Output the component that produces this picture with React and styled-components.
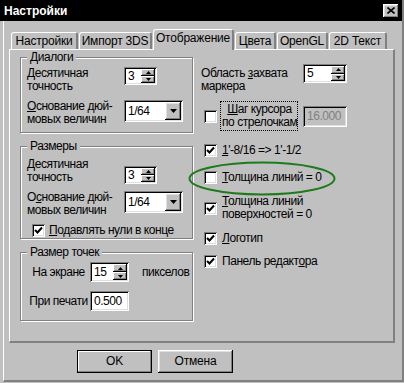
import React from "react";
import styled, { createGlobalStyle, css } from "styled-components";

const Global = createGlobalStyle`
    html, body {
        margin: 0;
        padding: 0;
        background: #c0c0c0;
    }
    body {
        font-family: "Liberation Sans", Arial, sans-serif;
        font-size: 12px;
        color: #000;
    }
`

const sunken = css`
    box-shadow: inset 1px 1px 0 #808080, inset -1px -1px 0 #fff,
        inset 2px 2px 0 #000, inset -2px -2px 0 #dfdfdf;
`
const raised = css`
    box-shadow: inset -1px -1px 0 #000, inset 1px 1px 0 #fff,
        inset -2px -2px 0 #808080, inset 2px 2px 0 #dfdfdf;
`
const text = css`
    font-size: 12px;
    line-height: 13px;
    letter-spacing: -0.45px;
`

const Window = styled.div`
    width: 402px;
    height: 382px;
    border-right: 2px solid #808080;
    background: #c0c0c0;
    display: flex;
    flex-direction: column;
`
const TitleBar = styled.div`
    height: 21px;
    flex: none;
    background: #000;
    color: #fff;
    display: flex;
    align-items: center;
    justify-content: space-between;
    padding: 0 3px 0 4px;
    font-weight: bold;
    font-size: 12px;
`
const CloseBtn = styled.div`
    width: 16px;
    height: 14px;
    background: #c0c0c0;
    display: flex;
    align-items: center;
    justify-content: center;
    ${raised}
`
const Body = styled.div`
    flex: 1;
    margin-left: 3px;
    border-left: 1px solid #fff;
    border-bottom: 2px solid #808080;
    padding: 8px 0 0 5px;
    display: flex;
    flex-direction: column;
`
const TabStrip = styled.div`
    height: 20px;
    display: flex;
    align-items: flex-end;
    gap: 1px;
    padding-left: 2px;
    position: relative;
    z-index: 1;
`
const Tab = styled.div`
    box-sizing: border-box;
    width: ${p => p.w}px;
    height: ${p => (p.active ? 21 : 17)}px;
    margin-bottom: ${p => (p.active ? -1 : 0)}px;
    padding-bottom: ${p => (p.active ? 3 : 0)}px;
    border-top: 1px solid #fff;
    border-left: 1px solid #fff;
    border-right: 2px solid #808080;
    border-radius: 3px 3px 0 0;
    background: #c0c0c0;
    display: flex;
    align-items: center;
    justify-content: center;
    white-space: nowrap;
    ${text}
    letter-spacing: -0.2px;
`
const Panel = styled.div`
    box-sizing: border-box;
    width: 386px;
    height: 294px;
    border-top: 1px solid #fff;
    border-left: 1px solid #fff;
    border-right: 2px solid #808080;
    border-bottom: 2px solid #808080;
    padding: 7px 0 0 10px;
    display: grid;
    grid-template-columns: 173px 1fr;
    column-gap: 8px;
    align-items: start;
`
const Column = styled.div`
    display: flex;
    flex-direction: column;
    gap: ${p => p.gap || 0}px;
`
const Group = styled.div`
    border: 1px solid #808080;
    box-shadow: inset 1px 1px 0 #fff, 1px 1px 0 #fff;
    padding: 0 6px ${p => p.pb}px;
    display: flex;
    flex-direction: column;
`
const Legend = styled.div`
    align-self: flex-start;
    margin: -7px 0 -6px 0;
    padding: 0 3px;
    background: #c0c0c0;
    ${text}
`
const GroupBody = styled.div`
    padding-top: ${p => p.pt}px;
    display: flex;
    flex-direction: column;
    gap: ${p => p.gap}px;
`
const Row = styled.div`
    display: flex;
    align-items: ${p => p.align || "flex-start"};
    margin-top: ${p => p.mt || 0}px;
`
const Label = styled.div`
    flex: none;
    width: ${p => p.w}px;
    margin-top: ${p => p.mt || 0}px;
    ${text}
`
const Key = styled.span`
    text-decoration: underline;
`
const Field = styled.div`
    box-sizing: border-box;
    flex: none;
    width: ${p => p.w}px;
    height: ${p => p.h}px;
    margin-top: ${p => p.mt || 0}px;
    margin-left: ${p => p.ml || 0}px;
    padding: 2px;
    background: ${p => (p.disabled ? "#c0c0c0" : "#fff")};
    color: ${p => (p.disabled ? "#808080" : "#000")};
    display: flex;
    ${text}
    ${sunken}
`
const FieldText = styled.div`
    flex: 1;
    padding-left: 2px;
    display: flex;
    align-items: center;
`
const SpinCol = styled.div`
    width: 14px;
    display: flex;
    flex-direction: column;
`
const SpinBtn = styled.div`
    flex: 1;
    background: #c0c0c0;
    display: flex;
    align-items: center;
    justify-content: center;
    box-shadow: inset -1px -1px 0 #000, inset 1px 1px 0 #fff, inset -2px -2px 0 #808080;
`
const DropBtn = styled.div`
    width: 16px;
    background: #c0c0c0;
    display: flex;
    align-items: center;
    justify-content: center;
    ${raised}
`
const Box = styled.div`
    box-sizing: border-box;
    flex: none;
    width: 13px;
    height: 13px;
    background: #fff;
    display: flex;
    align-items: center;
    justify-content: center;
    ${sunken}
`
const CheckRow = styled.div`
    position: relative;
    display: flex;
    align-items: center;
    gap: ${p => p.gap || 5}px;
    margin-left: ${p => p.ml || 3}px;
    margin-top: ${p => p.mt || 0}px;
    ${text}
`
const FocusLabel = styled.div`
    box-sizing: border-box;
    width: 78px;
    height: 30px;
    margin-left: 3px;
    padding: 1px 0 0 1px;
    border: 1px dotted #000;
    white-space: nowrap;
    ${text}
`
const Unit = styled.div`
    margin-left: 13px;
    ${text}
`
const Ring = styled.svg`
    position: absolute;
    left: -16px;
    top: -10px;
    pointer-events: none;
`
const ButtonRow = styled.div`
    display: flex;
    gap: 6px;
    margin-top: 7px;
    padding-left: 68px;
`
const Button = styled.div`
    box-sizing: border-box;
    width: 75px;
    height: 23px;
    display: flex;
    align-items: center;
    justify-content: center;
    background: #c0c0c0;
    ${text}
    letter-spacing: -0.2px;
    ${p => p.primary
        ? css`
            border: 1px solid #000;
            box-shadow: inset -1px -1px 0 #808080, inset 1px 1px 0 #fff;
        `
        : raised}
`

const Check = ({ checked }) => (
    <Box>
        {checked && (
            <svg width="9" height="9" viewBox="0 0 9 9">
                <polyline points="1,4 3.5,6.5 8,1.5" fill="none" stroke="#000" strokeWidth="2" />
            </svg>
        )}
    </Box>
)

const Arrow = ({ up }) => (
    <svg width="5" height="3" viewBox="0 0 5 3">
        <polygon points={up ? "2.5,0 5,3 0,3" : "0,0 5,0 2.5,3"} fill="#000" />
    </svg>
)

const Spinner = ({ value, w, h, mt, ml }) => (
    <Field w={w} h={h} mt={mt} ml={ml}>
        <FieldText>{value}</FieldText>
        <SpinCol>
            <SpinBtn><Arrow up /></SpinBtn>
            <SpinBtn><Arrow /></SpinBtn>
        </SpinCol>
    </Field>
)

const Combo = ({ value }) => (
    <Field w={59} h={22}>
        <FieldText>{value}</FieldText>
        <DropBtn>
            <svg width="7" height="4" viewBox="0 0 7 4">
                <polygon points="0,0 7,0 3.5,4" fill="#000" />
            </svg>
        </DropBtn>
    </Field>
)

const tabs = [
    { name: "Настройки", w: 67 },
    { name: "Импорт 3DS", w: 73 },
    { name: "Отображение", w: 81, active: true },
    { name: "Цвета", w: 41 },
    { name: "OpenGL", w: 51 },
    { name: "2D Текст", w: 58 },
]

const App = () => {
    return (
        <>
            <Global />
            <Window>
                <TitleBar>
                    <span>Настройки</span>
                    <CloseBtn>
                        <svg width="8" height="7" viewBox="0 0 8 7">
                            <path d="M0.5 0.5 L7.5 6.5 M7.5 0.5 L0.5 6.5" stroke="#000" strokeWidth="1.6" />
                        </svg>
                    </CloseBtn>
                </TitleBar>
                <Body>
                    <TabStrip>
                        {tabs.map(t => (
                            <Tab key={t.name} w={t.w} active={t.active}>{t.name}</Tab>
                        ))}
                    </TabStrip>
                    <Panel>
                        <Column gap={13}>
                            <Group pb={6}>
                                <Legend>Диалоги</Legend>
                                <GroupBody pt={9} gap={7}>
                                    <Row>
                                        <Label w={97}><Key>Д</Key>есятичная<br />точность</Label>
                                        <Spinner value="3" w={33} h={18} />
                                    </Row>
                                    <Row>
                                        <Label w={97}><Key>О</Key>снование дюй-<br />мовых величин</Label>
                                        <Combo value="1/64" />
                                    </Row>
                                </GroupBody>
                            </Group>
                            <Group pb={1}>
                                <Legend>Размеры</Legend>
                                <GroupBody pt={11} gap={7}>
                                    <Row>
                                        <Label w={97}><Key>Д</Key>есятичная<br />точность</Label>
                                        <Spinner value="3" w={33} h={18} mt={8} />
                                    </Row>
                                    <Row>
                                        <Label w={97}>О<Key>с</Key>нование дюй-<br />мовых величин</Label>
                                        <Combo value="1/64" />
                                    </Row>
                                    <CheckRow ml={5} gap={4}>
                                        <Check checked />
                                        <span><Key>П</Key>одавлять нули в конце</span>
                                    </CheckRow>
                                </GroupBody>
                            </Group>
                            <Group pb={9}>
                                <Legend>Размер точек</Legend>
                                <GroupBody pt={9} gap={9}>
                                    <Row align="center">
                                        <Label w={63}>На экране</Label>
                                        <Spinner value="15" w={39} h={20} />
                                        <Unit>пикселов</Unit>
                                    </Row>
                                    <Row align="center">
                                        <Label w={63}>При печати</Label>
                                        <Field w={39} h={20}>
                                            <FieldText>0.500</FieldText>
                                        </Field>
                                    </Row>
                                </GroupBody>
                            </Group>
                        </Column>
                        <Column>
                            <Row mt={7}>
                                <Label w={102} mt={3}>Область <Key>з</Key>ахвата<br />маркера</Label>
                                <Spinner value="5" w={44} h={19} />
                            </Row>
                            <Row mt={8} align="center">
                                <CheckRow gap={0}>
                                    <Check />
                                </CheckRow>
                                <FocusLabel><Key>Ш</Key>аг курсора<br />по стрелочкам</FocusLabel>
                                <Field w={44} h={21} ml={5} disabled>
                                    <FieldText>16.000</FieldText>
                                </Field>
                            </Row>
                            <CheckRow mt={13}>
                                <Check checked />
                                <span><Key>1</Key>'-8/16 =&gt; 1'-1/2</span>
                            </CheckRow>
                            <CheckRow mt={14}>
                                <Check />
                                <span><Key>Т</Key>олщина линий = 0</span>
                                <Ring width="150" height="36" viewBox="0 0 150 36">
                                    <ellipse cx="74" cy="17.5" rx="72.5" ry="16" fill="none" stroke="#1d7a1d" strokeWidth="2" />
                                </Ring>
                            </CheckRow>
                            <CheckRow mt={11}>
                                <Check checked />
                                <span><Key>Т</Key>олщина линий<br />поверхностей = 0</span>
                            </CheckRow>
                            <CheckRow mt={11}>
                                <Check checked />
                                <span><Key>Л</Key>оготип</span>
                            </CheckRow>
                            <CheckRow mt={10}>
                                <Check checked />
                                <span>Панель редакт<Key>о</Key>ра</span>
                            </CheckRow>
                        </Column>
                    </Panel>
                    <ButtonRow>
                        <Button primary>OK</Button>
                        <Button>Отмена</Button>
                    </ButtonRow>
                </Body>
            </Window>
        </>
    )
}

export default App
